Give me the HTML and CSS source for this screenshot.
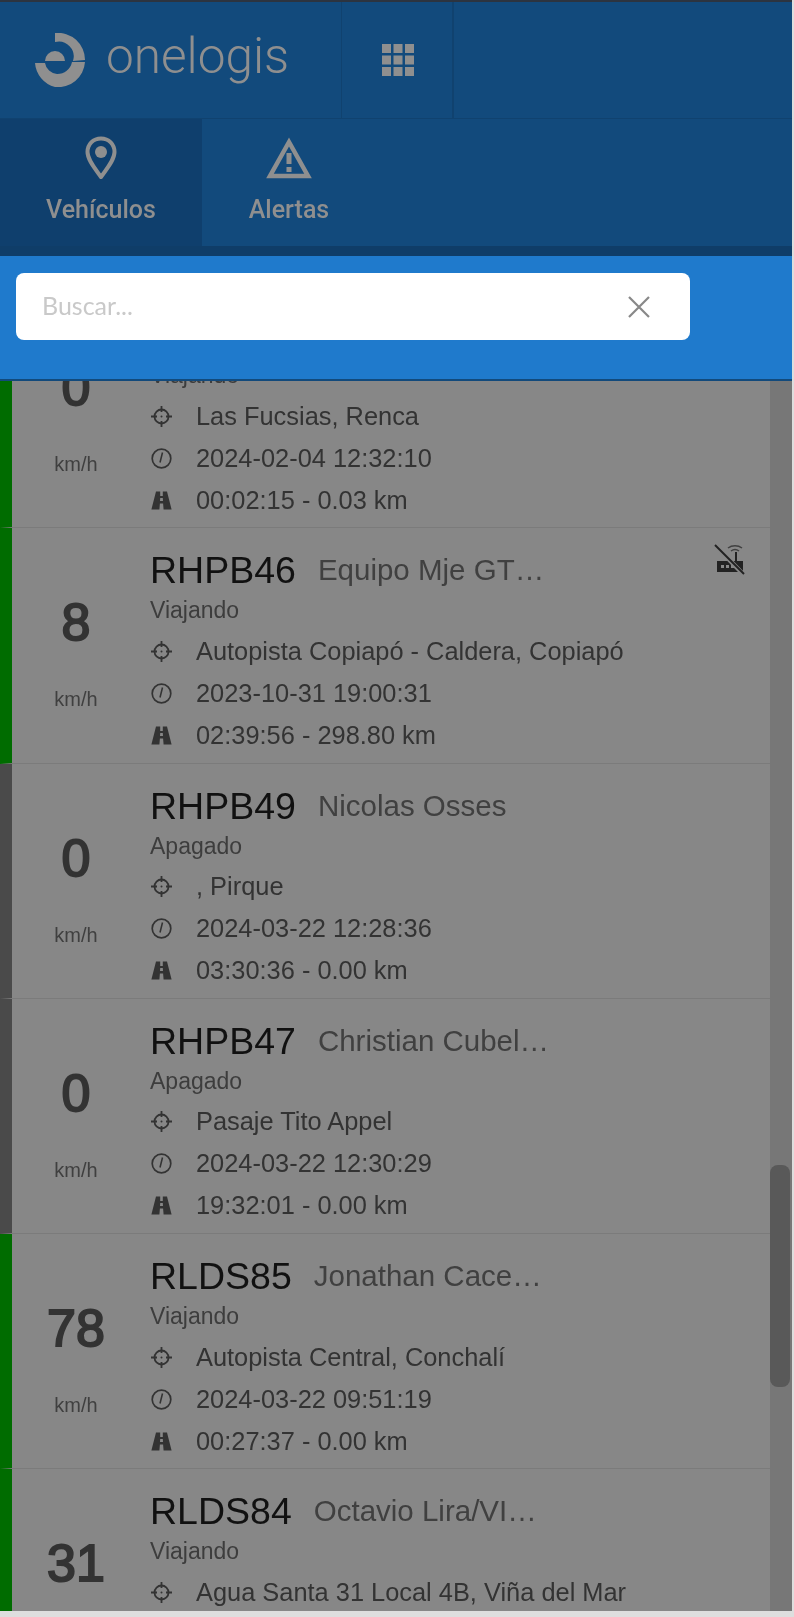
FILE: index.html
```html
<!DOCTYPE html>
<html lang="es">
<head>
  <meta charset="UTF-8">
  <title>onelogis</title>
  <link rel="stylesheet" href="styles.css">
</head>
<body>
  <svg class="sprites" xmlns="http://www.w3.org/2000/svg">
    <symbol id="i-target" viewBox="0 0 21 21">
      <circle cx="10.5" cy="10.5" r="7" fill="none" stroke="currentColor" stroke-width="1.8"/>
      <path d="M10.5 0v6M10.5 15v6M0 10.5h6M15 10.5h6" stroke="currentColor" stroke-width="1.8"/>
      <circle cx="10.5" cy="10.5" r="1" fill="currentColor"/>
    </symbol>
    <symbol id="i-clock" viewBox="0 0 21 21">
      <circle cx="10.5" cy="10.5" r="9.3" fill="none" stroke="currentColor" stroke-width="1.7"/>
      <path d="M11.5 4.5 L9 14.5" stroke="currentColor" stroke-width="1.6"/>
    </symbol>
    <symbol id="i-road" viewBox="0 0 21 21">
      <path fill="currentColor" d="M5 1.5h4.2v4.5h2.6V1.5H16l4.6 18H12.6l-.5-6H8.9l-.5 6H.4zM9.2 8l-.2 3h3l-.2-3z"/>
    </symbol>
  </svg>

  <div class="app">
    <header class="topbar">
      <div class="brand">
        <svg class="brand-mark" viewBox="0 0 50 54" xmlns="http://www.w3.org/2000/svg">
          <path d="M20 0A27 27 0 0 1 50 27L38 28A15 15 0 0 0 20 9Z"/>
          <path d="M0 30L10 30A13 13 0 0 0 22 41A15 15 0 0 0 37 29L50 29A27 27 0 0 1 20 54A27 27 0 0 1 0 30Z"/>
          <path d="M10 28A10 10 0 0 1 30 28Z"/>
        </svg>
        <span class="brand-name">onelogis</span>
      </div>
      <div class="apps">
        <svg class="apps-icon" viewBox="0 0 32 32" xmlns="http://www.w3.org/2000/svg">
          <path d="M0 0h9v9H0zM11.500 0h9v9h-9zM23 0h9v9h-9zM0 11.500h9v9H0zM11.500 11.500h9v9h-9zM23 11.500h9v9h-9zM0 23h9v9H0zM11.500 23h9v9h-9zM23 23h9v9h-9z"/>
        </svg>
      </div>
    </header>

    <nav class="tabs">
      <div class="tab tab-active">
        <svg class="tab-icon" width="32" height="44" viewBox="0 0 32 44" xmlns="http://www.w3.org/2000/svg">
          <path d="M16 2.500C8 2.500 2.500 8.500 2.500 16c0 8 8 17 13.500 25 5.500-8 13.500-17 13.500-25C29.500 8.500 24 2.500 16 2.500Z" fill="none" stroke="currentColor" stroke-width="4" stroke-linejoin="round"/>
          <circle cx="16" cy="16" r="6" fill="currentColor"/>
        </svg>
        <span>Vehículos</span>
      </div>
      <div class="tab">
        <svg class="tab-icon" width="48" height="44" viewBox="0 0 48 44" xmlns="http://www.w3.org/2000/svg">
          <path d="M24 6L43 40H5Z" fill="none" stroke="currentColor" stroke-width="4.500"/>
          <path d="M21.500 17h5v11h-5zM21.500 31h5v5h-5z" fill="currentColor"/>
        </svg>
        <span>Alertas</span>
      </div>
    </nav>

    <div class="search-band">
      <div class="search-box">
        <span class="search-placeholder">Buscar...</span>
        <svg class="search-clear" width="22" height="22" viewBox="0 0 22 22" xmlns="http://www.w3.org/2000/svg">
          <path d="M1 1L21 21M21 1L1 21" stroke="currentColor" stroke-width="2.200"/>
        </svg>
      </div>
    </div>

    <div class="list-wrap">
      <div class="list">
        <div class="row row-on row-first">
          <div class="speed"><b>0</b><small>km/h</small></div>
          <div class="info">
            <div class="title">&nbsp;</div>
            <div class="status">Viajando</div>
            <div class="line"><svg class="ico"><use href="#i-target"/></svg>Las Fucsias, Renca</div>
            <div class="line"><svg class="ico"><use href="#i-clock"/></svg>2024-02-04 12:32:10</div>
            <div class="line"><svg class="ico"><use href="#i-road"/></svg>00:02:15 - 0.03 km</div>
          </div>
        </div>

        <div class="row row-on">
          <div class="speed"><b>8</b><small>km/h</small></div>
          <div class="info">
            <div class="title"><span class="plate">RHPB46</span><span class="driver">Equipo Mje GT…</span></div>
            <div class="status">Viajando</div>
            <div class="line"><svg class="ico"><use href="#i-target"/></svg>Autopista Copiapó - Caldera, Copiapó</div>
            <div class="line"><svg class="ico"><use href="#i-clock"/></svg>2023-10-31 19:00:31</div>
            <div class="line"><svg class="ico"><use href="#i-road"/></svg>02:39:56 - 298.80 km</div>
          </div>
          <svg class="no-signal" width="32" height="32" viewBox="0 0 32 32" xmlns="http://www.w3.org/2000/svg">
            <path d="M3 17h26v11H3z" fill="currentColor"/>
            <path d="M7 21h3v3H7zM12 21h3v3h-3zM17 21h3v3h-3z" fill="#878787"/>
            <path d="M22 17V8" stroke="currentColor" stroke-width="2"/>
            <path d="M14 4c4-3 10-3 14 0M17 7c2.500-2 5.500-2 8 0" fill="none" stroke="currentColor" stroke-width="1.500" opacity=".7"/>
            <path d="M1 1L30 31" stroke="#878787" stroke-width="4.500"/>
            <path d="M1 1L30 30" stroke="currentColor" stroke-width="2"/>
          </svg>
        </div>

        <div class="row row-off">
          <div class="speed"><b>0</b><small>km/h</small></div>
          <div class="info">
            <div class="title"><span class="plate">RHPB49</span><span class="driver">Nicolas Osses</span></div>
            <div class="status">Apagado</div>
            <div class="line"><svg class="ico"><use href="#i-target"/></svg>, Pirque</div>
            <div class="line"><svg class="ico"><use href="#i-clock"/></svg>2024-03-22 12:28:36</div>
            <div class="line"><svg class="ico"><use href="#i-road"/></svg>03:30:36 - 0.00 km</div>
          </div>
        </div>

        <div class="row row-off">
          <div class="speed"><b>0</b><small>km/h</small></div>
          <div class="info">
            <div class="title"><span class="plate">RHPB47</span><span class="driver">Christian Cubel…</span></div>
            <div class="status">Apagado</div>
            <div class="line"><svg class="ico"><use href="#i-target"/></svg>Pasaje Tito Appel</div>
            <div class="line"><svg class="ico"><use href="#i-clock"/></svg>2024-03-22 12:30:29</div>
            <div class="line"><svg class="ico"><use href="#i-road"/></svg>19:32:01 - 0.00 km</div>
          </div>
        </div>

        <div class="row row-on">
          <div class="speed"><b>78</b><small>km/h</small></div>
          <div class="info">
            <div class="title"><span class="plate">RLDS85</span><span class="driver">Jonathan Cace…</span></div>
            <div class="status">Viajando</div>
            <div class="line"><svg class="ico"><use href="#i-target"/></svg>Autopista Central, Conchalí</div>
            <div class="line"><svg class="ico"><use href="#i-clock"/></svg>2024-03-22 09:51:19</div>
            <div class="line"><svg class="ico"><use href="#i-road"/></svg>00:27:37 - 0.00 km</div>
          </div>
        </div>

        <div class="row row-on">
          <div class="speed"><b>31</b><small>km/h</small></div>
          <div class="info">
            <div class="title"><span class="plate">RLDS84</span><span class="driver">Octavio Lira/VI…</span></div>
            <div class="status">Viajando</div>
            <div class="line"><svg class="ico"><use href="#i-target"/></svg>Agua Santa 31 Local 4B, Viña del Mar</div>
          </div>
        </div>
      </div>

      <div class="scrollbar"><div class="scroll-thumb"></div></div>
    </div>
  </div>
</body>
</html>
```

FILE: styles.css
```css
/* Global */
body {
  margin: 0;
  height: 1617px;
  overflow: hidden;
  background: #dedede;
  font-family: "Liberation Sans", Arial, sans-serif;
}

.sprites {
  display: none;
}

/* the whole capture is slightly soft */
.app {
  width: 792px;
  height: 1611px;
  display: flex;
  flex-direction: column;
  overflow: hidden;
  border-top: 2px solid #2c3440;
  box-sizing: border-box;
  background: #124a7c;
  filter: blur(0.4px);
}

/* Top bar */
.topbar {
  height: 116px;
  flex: none;
  display: flex;
  border-bottom: 1px solid #10426f;
  color: #8f8f8f;
}

.brand {
  width: 342px;
  box-sizing: border-box;
  padding-left: 35px;
  display: flex;
  align-items: center;
  gap: 21px;
  border-right: 1px solid #10426f;
}

.brand-mark {
  width: 50px;
  height: 54px;
  flex: none;
  fill: #8f8f8f;
}

.brand-name {
  font-family: Roboto, sans-serif;
  font-weight: 300;
  font-size: 49.5px;
  line-height: 1;
  margin-top: -6px;
}

.apps {
  width: 112px;
  padding-left: 2px;
  box-sizing: border-box;
  display: flex;
  align-items: center;
  justify-content: center;
  border-right: 2px solid #10426f;
}

.apps-icon {
  width: 32px;
  height: 32px;
  fill: #8f8f8f;
}

/* Tabs */
.tabs {
  height: 127px;
  flex: none;
  display: flex;
  color: #8f8f8f;
}

.tab {
  width: 174px;
  display: flex;
  flex-direction: column;
  align-items: center;
  padding-top: 17px;
  box-sizing: border-box;
  font-family: Roboto, sans-serif;
  font-weight: 500;
  font-size: 25px;
  gap: 15px;
}

.tab-active {
  width: 202px;
  background: #0f3f6d;
}

.tab-icon {
  flex: none;
}

/* Search */
.search-band {
  flex: none;
  height: 125px;
  box-sizing: border-box;
  margin-top: 10px;
  padding: 17px 0 0 16px;
  background: #1f7acc;
  border-bottom: 2px solid #124a7c;
  box-shadow: 0 -10px 0 #0f3d68;
}

.search-box {
  width: 674px;
  height: 67px;
  box-sizing: border-box;
  padding: 0 40px 4px 26px;
  display: flex;
  align-items: center;
  justify-content: space-between;
  background: #fff;
  border-radius: 8px;
}

.search-placeholder {
  font-family: Lato, sans-serif;
  font-size: 25px;
  color: #c9c9c9;
}

.search-clear {
  color: #888;
  margin-top: 4px;
}

/* Vehicle list */
.list-wrap {
  flex: 1;
  min-height: 0;
  position: relative;
  display: flex;
  background: #878787;
  overflow: hidden;
}

.list {
  flex: 1;
  min-width: 0;
}

.row {
  height: 235.25px;
  box-sizing: border-box;
  display: flex;
  position: relative;
  background: #878787;
  border-left: 12px solid #006c00;
  border-bottom: 1px solid #7b7b7b;
}

.row-first {
  margin-top: -88px;
}

.row-off {
  border-left-color: #4a4a4a;
}

.speed {
  width: 128px;
  flex: none;
  display: flex;
  flex-direction: column;
  align-items: center;
  color: #333;
  padding-top: 64px;
  box-sizing: border-box;
}

.speed b {
  font-size: 52px;
  line-height: 60px;
  font-weight: normal;
  -webkit-text-stroke: 2px #333;
}

.speed small {
  margin-top: 35px;
  font-size: 20px;
  line-height: 24px;
  color: #404040;
}

.info {
  padding: 20px 0 0 10px;
  min-width: 0;
}

.title {
  height: 44px;
  line-height: 44px;
  display: flex;
  white-space: nowrap;
}

.plate {
  font-size: 37.5px;
  color: #111;
}

.driver {
  margin-left: 22px;
  font-size: 29.5px;
  color: #404040;
}

.status {
  height: 35px;
  line-height: 30px;
  margin-top: 3px;
  font-size: 23px;
  color: #3d3d3d;
}

.line {
  height: 42px;
  display: flex;
  align-items: center;
  gap: 24px;
  font-size: 25.4px;
  color: #333;
  white-space: nowrap;
}

.ico {
  width: 21px;
  height: 21px;
  flex: none;
  margin-left: 1px;
}

.no-signal {
  position: absolute;
  top: 16px;
  right: 24px;
  color: #222;
}

/* Scrollbar */
.scrollbar {
  width: 22px;
  flex: none;
  background: #777;
}

.scroll-thumb {
  width: 20px;
  height: 222px;
  margin-top: 784px;
  background: #595959;
  border-radius: 8px;
}
```
